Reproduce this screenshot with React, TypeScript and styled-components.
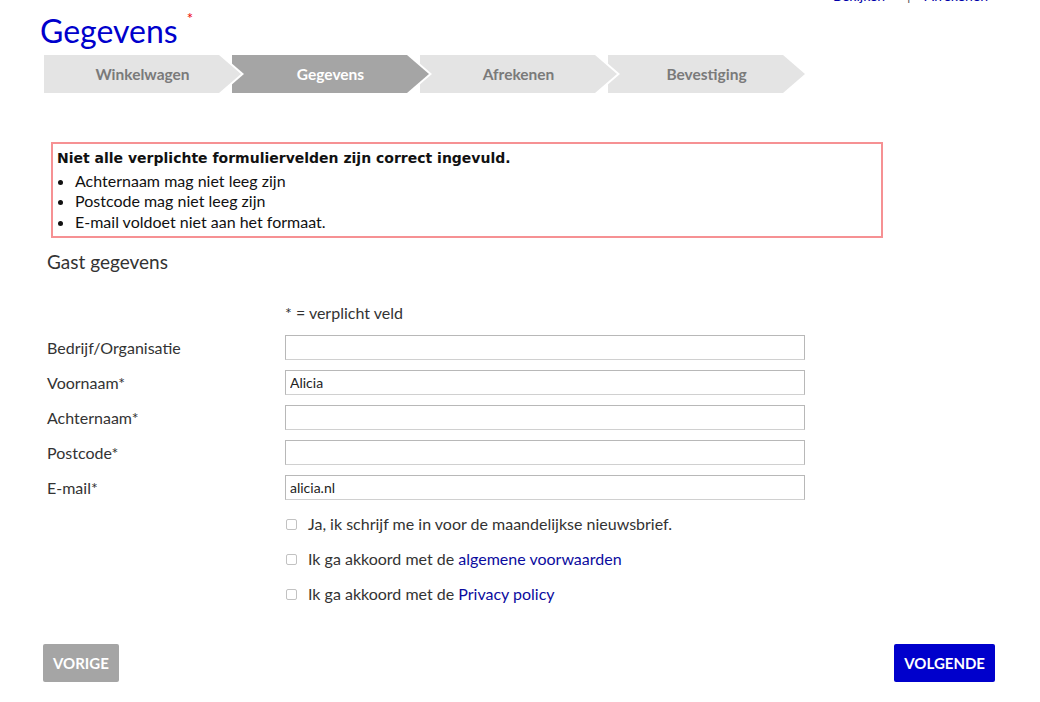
import React from "react";
import styled, { createGlobalStyle } from "styled-components";

const GlobalStyle = createGlobalStyle`
  html, body {
    margin: 0;
    padding: 0;
    background: #ffffff;
  }
  body {
    font-family: Lato, "Open Sans", "Liberation Sans", sans-serif;
    color: #333333;
    overflow: hidden;
  }
  * {
    box-sizing: border-box;
  }
`;

const Page = styled.div`
  width: 1040px;
  padding: 0 45px 0 40px;
`;

const TopLinks = styled.div`
  display: flex;
  justify-content: flex-end;
  align-items: center;
  margin: -12px 7px 0 0;
  font-size: 14px;
  line-height: 16px;
`;

const TopLink = styled.a`
  color: #0000aa;
  text-decoration: none;
`;

const Divider = styled.span`
  color: #555555;
  margin: 0 14px 0 22px;
`;

const Title = styled.h1`
  margin: 8px 0 0;
  font-size: 32px;
  line-height: 38px;
  font-weight: 400;
  color: #0000cc;
`;

const Required = styled.sup`
  color: #ee0000;
  font-size: 15px;
  margin-left: 9px;
  vertical-align: 19px;
  line-height: 0;
`;

const Steps = styled.div`
  display: flex;
  margin: 5px 0 0 4px;
`;

const StepOutline = styled.div<{ $index: number }>`
  position: relative;
  z-index: ${(p) => 10 - p.$index};
  width: 200px;
  height: 38px;
  margin-right: -12px;
  background: #ffffff;
  clip-path: polygon(0 0, 178px 0, 200px 50%, 178px 100%, 0 100%);
`;

const StepFill = styled.div<{ $active?: boolean }>`
  display: flex;
  align-items: center;
  justify-content: center;
  height: 100%;
  padding: 0 3px 0 0;
  background: ${(p) => (p.$active ? "#a5a5a5" : "#e4e4e4")};
  color: ${(p) => (p.$active ? "#ffffff" : "#7a7a7a")};
  font-size: 15.5px;
  font-weight: 700;
  clip-path: polygon(0 0, 175px 0, 197px 50%, 175px 100%, 0 100%);
`;

const ErrorBox = styled.div`
  width: 832px;
  margin: 49px 0 0 11px;
  border: 2px solid #f69193;
  padding: 4px 4px 3px;
  color: #111111;
  font-size: 16px;
  line-height: 20.7px;
`;

const ErrorTitle = styled.div`
  font-family: "DejaVu Sans", Verdana, sans-serif;
  font-size: 14px;
  font-weight: 700;
  margin-bottom: 2px;
`;

const ErrorList = styled.ul`
  margin: 0;
  padding-left: 18px;
`;

const SectionTitle = styled.h2`
  margin: 12px 0 21px 7px;
  font-size: 19px;
  line-height: 24px;
  font-weight: 400;
  color: #333333;
`;

const Form = styled.div`
  display: grid;
  grid-template-columns: 238px 520px;
  grid-auto-rows: 35px;
  margin-left: 7px;
  font-size: 16px;
`;

const Label = styled.label`
  display: flex;
  align-items: center;
  color: #333333;
`;

const Note = styled.div`
  display: flex;
  align-items: center;
  color: #333333;
`;

const Field = styled.div`
  display: flex;
  align-items: center;
`;

const Input = styled.input`
  width: 520px;
  height: 25px;
  margin: 0;
  padding: 0 4px;
  border: 1px solid #b8b8b8;
  border-bottom-color: #d0d0d0;
  border-radius: 0;
  font-family: Lato, "Liberation Sans", sans-serif;
  font-size: 14px;
  color: #222222;
  background: #ffffff;
  outline: none;
`;

const Options = styled.div`
  display: grid;
  grid-auto-rows: 35px;
  margin: 1px 0 0 245px;
  font-size: 16px;
`;

const Option = styled.label`
  display: flex;
  align-items: center;
  gap: 11px;
  color: #333333;
`;

const Check = styled.input`
  appearance: none;
  width: 11px;
  height: 11px;
  margin: 2px 0 0 1px;
  border: 1px solid #c2c2c2;
  border-radius: 2px;
  background: #ffffff;
`;

const TextLink = styled.a`
  color: #0b0b9e;
  text-decoration: none;
`;

const Footer = styled.div`
  display: flex;
  justify-content: space-between;
  margin: 33px 0 0 3px;
`;

const Button = styled.button<{ $primary?: boolean }>`
  height: 38px;
  padding: 0 10px;
  border: 0;
  border-radius: 2px;
  background: ${(p) => (p.$primary ? "#0000cc" : "#a5a5a5")};
  color: #ffffff;
  font-family: Lato, "Liberation Sans", sans-serif;
  font-size: 15px;
  font-weight: 700;
  cursor: pointer;
`;

const steps = ["Winkelwagen", "Gegevens", "Afrekenen", "Bevestiging"];

const fields = [
  { label: "Bedrijf/Organisatie", value: "" },
  { label: "Voornaam*", value: "Alicia" },
  { label: "Achternaam*", value: "" },
  { label: "Postcode*", value: "" },
  { label: "E-mail*", value: "alicia.nl" },
];

const errors = [
  "Achternaam mag niet leeg zijn",
  "Postcode mag niet leeg zijn",
  "E-mail voldoet niet aan het formaat.",
];

export default function App() {
  return (
    <>
      <GlobalStyle />
      <Page>
        <TopLinks>
          <TopLink href="#">Bekijken</TopLink>
          <Divider>|</Divider>
          <TopLink href="#">Afrekenen</TopLink>
        </TopLinks>
        <Title>
          Gegevens<Required>*</Required>
        </Title>
        <Steps>
          {steps.map((s, i) => (
            <StepOutline key={s} $index={i}>
              <StepFill $active={i === 1}>{s}</StepFill>
            </StepOutline>
          ))}
        </Steps>
        <ErrorBox>
          <ErrorTitle>Niet alle verplichte formuliervelden zijn correct ingevuld.</ErrorTitle>
          <ErrorList>
            {errors.map((e) => (
              <li key={e}>{e}</li>
            ))}
          </ErrorList>
        </ErrorBox>
        <SectionTitle>Gast gegevens</SectionTitle>
        <Form>
          <div />
          <Note>* = verplicht veld</Note>
          {fields.map((f) => (
            <React.Fragment key={f.label}>
              <Label>{f.label}</Label>
              <Field>
                <Input type="text" defaultValue={f.value} />
              </Field>
            </React.Fragment>
          ))}
        </Form>
        <Options>
          <Option>
            <Check type="checkbox" />
            Ja, ik schrijf me in voor de maandelijkse nieuwsbrief.
          </Option>
          <Option>
            <Check type="checkbox" />
            <span>
              Ik ga akkoord met de <TextLink href="#">algemene voorwaarden</TextLink>
            </span>
          </Option>
          <Option>
            <Check type="checkbox" />
            <span>
              Ik ga akkoord met de <TextLink href="#">Privacy policy</TextLink>
            </span>
          </Option>
        </Options>
        <Footer>
          <Button>VORIGE</Button>
          <Button $primary>VOLGENDE</Button>
        </Footer>
      </Page>
    </>
  );
}
